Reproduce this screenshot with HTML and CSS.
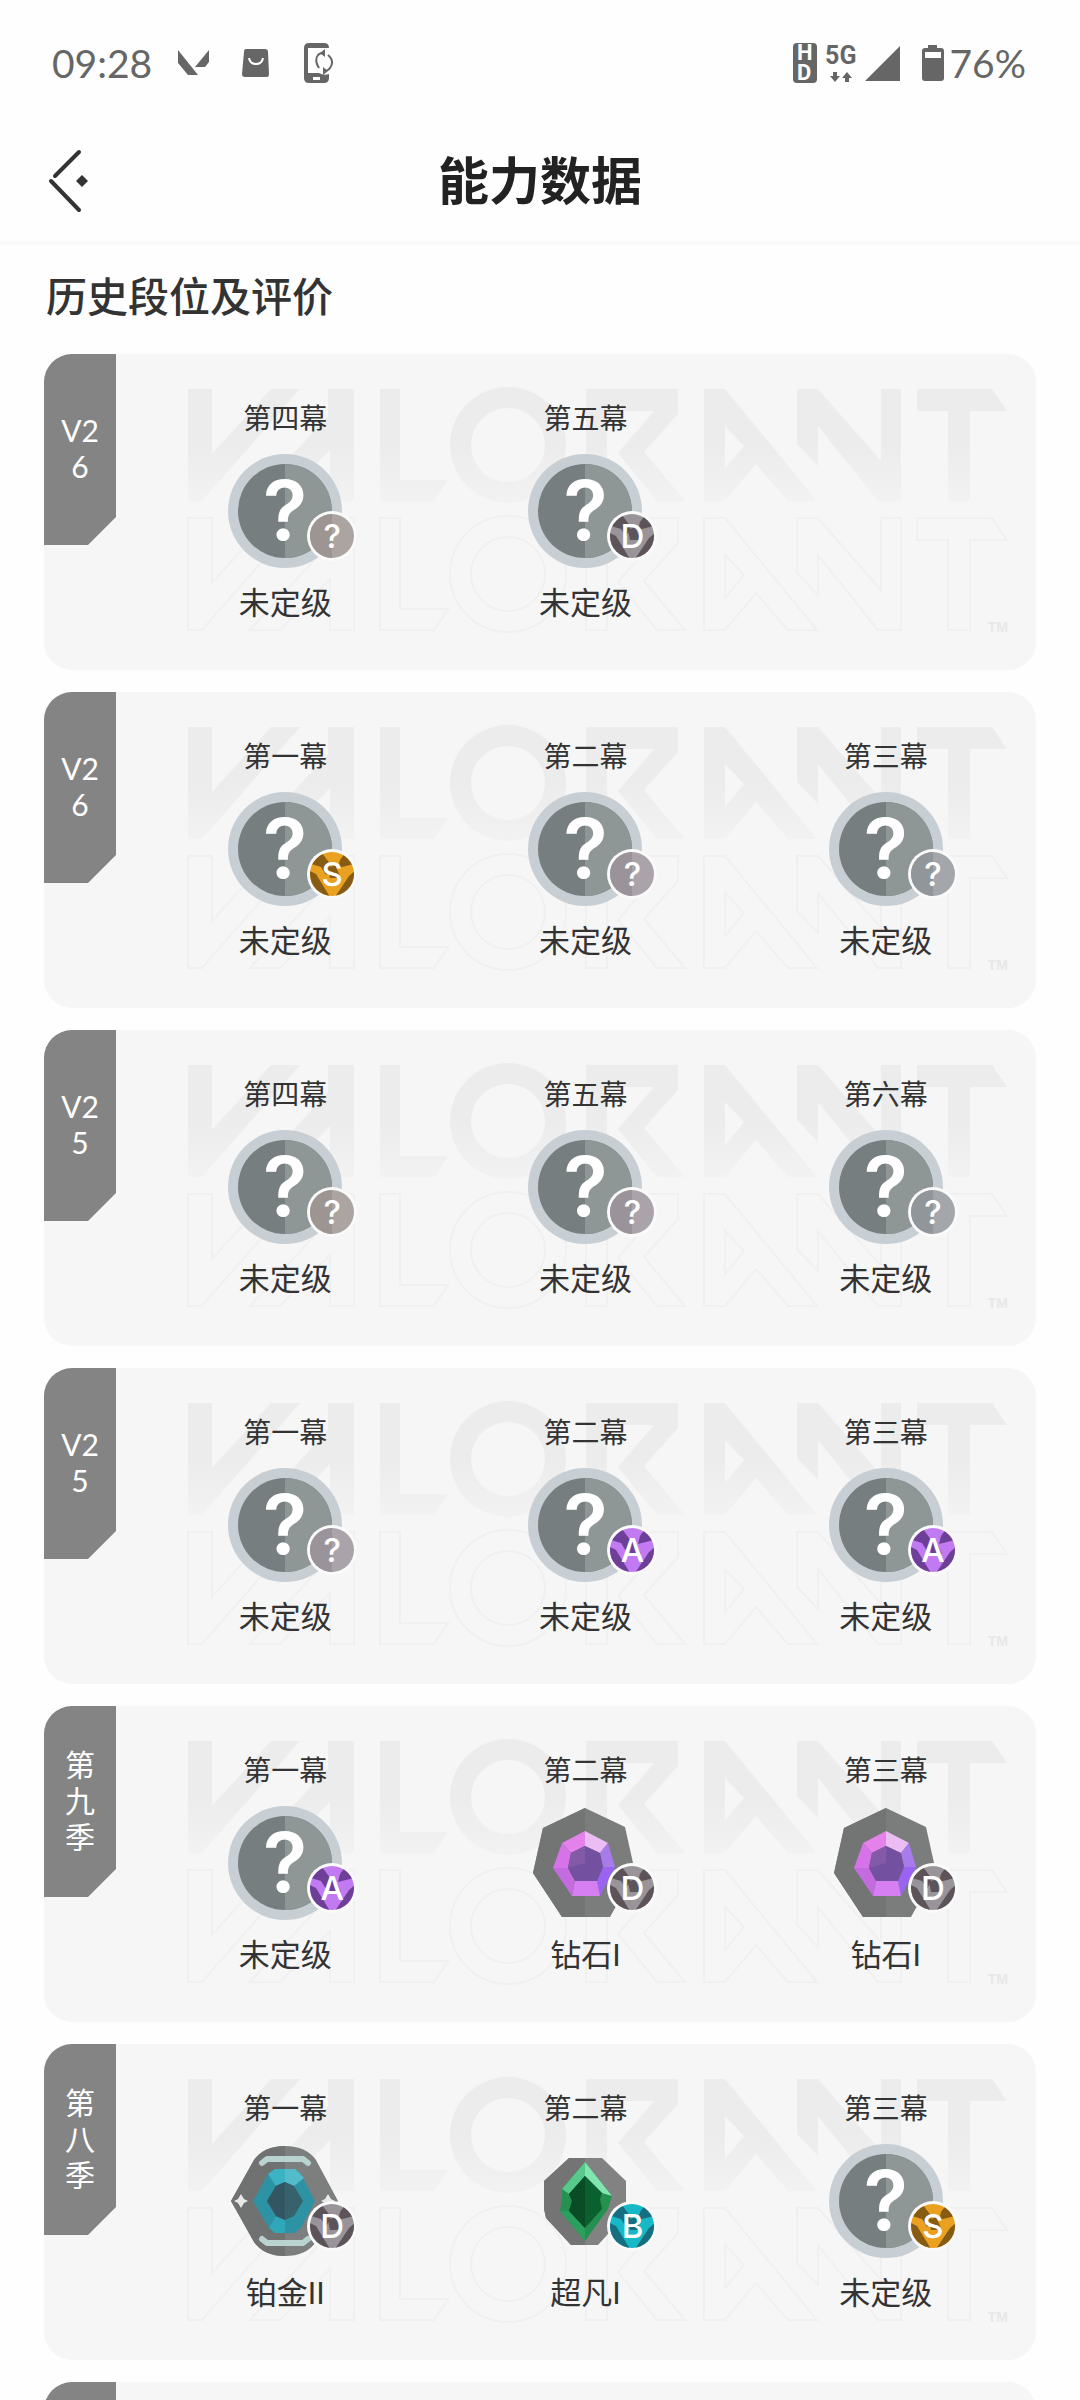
FILE: index.html
```html
<!DOCTYPE html>
<html lang="zh-CN">
<head>
<meta charset="utf-8">
<meta name="viewport" content="width=device-width, initial-scale=1">
<title>能力数据</title>
<link rel="stylesheet" href="styles.css">
</head>
<body>
<svg class="defs" aria-hidden="true">
  <defs>
    <linearGradient id="fade" x1="0" y1="0" x2="0" y2="1">
      <stop offset="0.5" stop-color="#ececec"/>
      <stop offset="1" stop-color="#f2f2f2"/>
    </linearGradient>
    <clipPath id="disc"><circle cx="24" cy="24" r="22"/></clipPath>
    <g id="wordmark">
      <path d="M144 35H168V100L227 35H256L158 147H144Z"/>
      <path d="M284 35H310V147H286V96L236 147H206L284 62Z"/>
      <path d="M336 35H356V126H404L390 147H336Z"/>
      <path fill-rule="evenodd" d="M464 33A58 58 0 1 1 464 149A58 58 0 1 1 464 33ZM464 54A37 37 0 1 0 464 128A37 37 0 1 0 464 54Z"/>
      <path d="M542 35H634V60L600 98L641 147H613L574 99L610 57H563V147H542Z"/>
      <path fill-rule="evenodd" d="M660 35H681L773 147H744L712 110L681 147H660ZM681 72V115L700 92Z"/>
      <path d="M753 35H774L837 107V35H857V147H834L774 72V112L753 90Z"/>
      <path d="M873 35H948L963 57H926V147H904V57H873Z"/>
    </g>
    <symbol id="backdrop" viewBox="0 0 992 316">
      <use href="#wordmark" fill="url(#fade)"/>
      <use href="#wordmark" y="129" fill="none" stroke="#f0f0f0" stroke-width="2"/>
    </symbol>
    <symbol id="unranked" viewBox="0 0 114 114">
      <circle cx="57" cy="57" r="57" fill="#c8cfd4"/>
      <circle cx="57" cy="57" r="47" fill="#767e80"/>
      <path d="M57 10A47 47 0 0 1 57 104Z" fill="#8f9696"/>
    </symbol>
    <symbol id="diamond" viewBox="0 0 114 114">
      <path d="M57 2L97 21L107 66L82 111H34L5 67L15 22Z" fill="#7a7d7c"/>
      <path d="M57 2L15 22L5 67L34 111H57Z" fill="#727574"/>
      <path d="M57 25L34 37L43 47L57 40Z" fill="#e481ea"/>
      <path d="M57 25L80 37L72 47L57 40Z" fill="#ecbcf5"/>
      <path d="M80 37L87 61H75L72 47Z" fill="#a77cea"/>
      <path d="M87 61L72 90L69 75L75 61Z" fill="#9a63f2"/>
      <path d="M72 90H44L47 75H69Z" fill="#d57ff2"/>
      <path d="M44 90L25 62H40L47 75Z" fill="#c56be0"/>
      <path d="M25 62L34 37L43 47L40 62Z" fill="#d673e8"/>
      <path d="M57 40L72 47L75 61L69 75H47L40 62L43 47Z" fill="#7350a0"/>
      <path d="M57 40L43 47L40 62L57 57Z" fill="#835aa6"/>
    </symbol>
    <symbol id="platinum" viewBox="0 0 114 114">
      <path d="M3 57L26 16Q36 2 57 2Q78 2 88 16L110 57L88 98Q78 112 57 112Q36 112 26 98Z" fill="#7d7f7e"/>
      <path d="M3 57L26 16Q36 2 57 2V112Q36 112 26 98Z" fill="#707272"/>
      <path d="M34 19L39 15H75L80 19" fill="none" stroke="#b9d3d1" stroke-width="6" stroke-linecap="round" stroke-linejoin="round"/>
      <path d="M34 95L39 99H75L80 95" fill="none" stroke="#b9d3d1" stroke-width="6" stroke-linecap="round" stroke-linejoin="round"/>
      <path d="M25 57L40 30L47 25H67L73 30L87 57L73 84L67 89H47L41 84Z" fill="#2d92a3"/>
      <path d="M47 25H67L73 30L66 42L57 38L48 42L40 30Z" fill="#3bb3c4"/>
      <path d="M57 25V38L66 42L76 34L67 25Z" fill="#52bccb"/>
      <path d="M57 89V76L48 72L41 84L47 89Z" fill="#30a7b8"/>
      <path d="M57 38L66 42L75 57L66 72L57 76L48 72L39 57L48 42Z" fill="#37616b"/>
      <path d="M57 38L48 42L39 57L48 72L57 76Z" fill="#335663"/>
      <path d="M13 50L16 55L20 57L16 59L13 64L10 59L6 57L10 55Z" fill="#e8e8e8"/>
      <path d="M100 50L103 55L107 57L103 59L100 64L97 59L93 57L97 55Z" fill="#e8e8e8"/>
    </symbol>
    <symbol id="ascendant" viewBox="0 0 114 114">
      <path d="M41 14H74L98 37V70L70 101H43L18 74L16 65V37Z" fill="#828282"/>
      <path d="M41 14H57V101H43L18 74L16 65V37Z" fill="#747474"/>
      <path d="M57 18L84 52L80 65L57 97L32 67L34 54V45Z" fill="#249150"/>
      <path d="M57 18L34 45L41 50L57 32Z" fill="#57c98b"/>
      <path d="M57 18L84 52L74 49L57 32Z" fill="#82e5af"/>
      <path d="M32 67L42 67L57 84V97Z" fill="#2b9f5d"/>
      <path d="M57 32L74 49L72 55L74 65L57 84L41 67L44 57L41 50Z" fill="#0b602f"/>
      <path d="M57 32L41 50L44 57L41 67L57 84Z" fill="#0a4c26"/>
    </symbol>
    <symbol id="facets" viewBox="0 0 48 48">
      <g clip-path="url(#disc)">
        <rect class="facet-light" width="48" height="48"/>
        <g class="facet-dark">
          <path d="M3 14L14 3L23 15L18 25L13 17Z"/>
          <path d="M32 10L37 3L46 14L30 18Z"/>
          <path d="M0 20L8 24L22 47H4Z"/>
          <path d="M48 20L41 26L27 47H44Z"/>
          <path d="M20 18L27 15L33 28H22Z"/>
        </g>
      </g>
    </symbol>
    <symbol id="plain" viewBox="0 0 48 48">
      <circle class="facet-light" cx="24" cy="24" r="22"/>
      <path class="facet-dark" d="M24 2A22 22 0 0 0 24 46Z"/>
    </symbol>
  </defs>
</svg>

<div class="app">
  <div class="status">
    <div class="status-group">
      <span class="clock">09:28</span>
      <svg class="ico-app" viewBox="0 0 32 26"><path d="M0 0L20 25H10L0 13Z"/><path d="M31 0V12L27 17H17Z"/></svg>
      <svg class="ico-bag" viewBox="0 0 28 28"><path d="M4 0H23Q26 0 26 3L27 25Q27 28 25 28H3Q0 28 0 25L2 3Q2 0 4 0Z"/><path d="M7 9Q8 15 14 15Q20 15 21 9" fill="none" stroke="#fff" stroke-width="2"/></svg>
      <svg class="ico-phone" viewBox="0 0 30 40"><path d="M5 0H20Q25 0 25 5H4V30H15Q20 33 25 31V35Q25 40 20 40H5Q0 40 0 35V5Q0 0 5 0ZM9 34V37H16V34Z" fill-rule="evenodd"/><g fill="none" stroke="#666" stroke-width="2"><path d="M15 25Q10 17 14 12Q16 10 19 10"/><path d="M24 12Q31 18 26 25Q24 28 20 28"/></g><path d="M16 10L21 6V14ZM24 28L19 24V32Z"/></svg>
    </div>
    <div class="status-group">
      <b class="hd">HD</b>
      <span class="net"><b>5G</b><svg class="ico-arrows" viewBox="0 0 22 10"><path d="M3 0H7V4H10L5 10L0 4H3ZM15 10H19V6H22L17 0L12 6H15Z"/></svg></span>
      <svg class="ico-signal" viewBox="0 0 35 35"><path d="M35 0V35H0Z"/></svg>
      <svg class="ico-battery" viewBox="0 0 22 36"><path d="M6 0H15V3H19Q22 3 22 6V33Q22 36 19 36H3Q0 36 0 33V6Q0 3 3 3H6ZM3 7V13H19V7Z" fill-rule="evenodd"/></svg>
      <span class="clock">76%</span>
    </div>
  </div>

  <header class="nav">
    <button class="back" type="button" aria-label="返回">
      <svg viewBox="0 0 40 64"><path d="M31 3L7 27M3 32L31 61" fill="none" stroke="#333" stroke-width="4" stroke-linecap="round"/><path d="M34 26L40 32L34 38L28 32Z" fill="#333"/></svg>
    </button>
    <h1>能力数据</h1>
  </header>

  <main class="content">
    <h2>历史段位及评价</h2>

    <section class="card">
      <svg class="backdrop" viewBox="0 0 992 316" aria-hidden="true"><use href="#backdrop"/></svg><small class="tm">TM</small>
      <h3 class="season"><span>V26</span></h3>
      <div class="acts">
        <div class="act"><p class="name">第四幕</p><div class="rank"><svg><use href="#unranked"/></svg><span class="mark">?</span><span class="badge warm"><svg><use href="#plain"/></svg><i>?</i></span></div><p class="tier">未定级</p></div>
        <div class="act"><p class="name">第五幕</p><div class="rank"><svg><use href="#unranked"/></svg><span class="mark">?</span><span class="badge d"><svg><use href="#facets"/></svg><i>D</i></span></div><p class="tier">未定级</p></div>
      </div>
    </section>

    <section class="card">
      <svg class="backdrop" viewBox="0 0 992 316" aria-hidden="true"><use href="#backdrop"/></svg><small class="tm">TM</small>
      <h3 class="season"><span>V26</span></h3>
      <div class="acts">
        <div class="act"><p class="name">第一幕</p><div class="rank"><svg><use href="#unranked"/></svg><span class="mark">?</span><span class="badge s"><svg><use href="#facets"/></svg><i>S</i></span></div><p class="tier">未定级</p></div>
        <div class="act"><p class="name">第二幕</p><div class="rank"><svg><use href="#unranked"/></svg><span class="mark">?</span><span class="badge mauve"><svg><use href="#plain"/></svg><i>?</i></span></div><p class="tier">未定级</p></div>
        <div class="act"><p class="name">第三幕</p><div class="rank"><svg><use href="#unranked"/></svg><span class="mark">?</span><span class="badge cool"><svg><use href="#plain"/></svg><i>?</i></span></div><p class="tier">未定级</p></div>
      </div>
    </section>

    <section class="card">
      <svg class="backdrop" viewBox="0 0 992 316" aria-hidden="true"><use href="#backdrop"/></svg><small class="tm">TM</small>
      <h3 class="season"><span>V25</span></h3>
      <div class="acts">
        <div class="act"><p class="name">第四幕</p><div class="rank"><svg><use href="#unranked"/></svg><span class="mark">?</span><span class="badge warm"><svg><use href="#plain"/></svg><i>?</i></span></div><p class="tier">未定级</p></div>
        <div class="act"><p class="name">第五幕</p><div class="rank"><svg><use href="#unranked"/></svg><span class="mark">?</span><span class="badge mauve"><svg><use href="#plain"/></svg><i>?</i></span></div><p class="tier">未定级</p></div>
        <div class="act"><p class="name">第六幕</p><div class="rank"><svg><use href="#unranked"/></svg><span class="mark">?</span><span class="badge cool"><svg><use href="#plain"/></svg><i>?</i></span></div><p class="tier">未定级</p></div>
      </div>
    </section>

    <section class="card">
      <svg class="backdrop" viewBox="0 0 992 316" aria-hidden="true"><use href="#backdrop"/></svg><small class="tm">TM</small>
      <h3 class="season"><span>V25</span></h3>
      <div class="acts">
        <div class="act"><p class="name">第一幕</p><div class="rank"><svg><use href="#unranked"/></svg><span class="mark">?</span><span class="badge mauve"><svg><use href="#plain"/></svg><i>?</i></span></div><p class="tier">未定级</p></div>
        <div class="act"><p class="name">第二幕</p><div class="rank"><svg><use href="#unranked"/></svg><span class="mark">?</span><span class="badge a"><svg><use href="#facets"/></svg><i>A</i></span></div><p class="tier">未定级</p></div>
        <div class="act"><p class="name">第三幕</p><div class="rank"><svg><use href="#unranked"/></svg><span class="mark">?</span><span class="badge a"><svg><use href="#facets"/></svg><i>A</i></span></div><p class="tier">未定级</p></div>
      </div>
    </section>

    <section class="card">
      <svg class="backdrop" viewBox="0 0 992 316" aria-hidden="true"><use href="#backdrop"/></svg><small class="tm">TM</small>
      <h3 class="season"><span>第九季</span></h3>
      <div class="acts">
        <div class="act"><p class="name">第一幕</p><div class="rank"><svg><use href="#unranked"/></svg><span class="mark">?</span><span class="badge a"><svg><use href="#facets"/></svg><i>A</i></span></div><p class="tier">未定级</p></div>
        <div class="act"><p class="name">第二幕</p><div class="rank"><svg><use href="#diamond"/></svg><span class="badge d"><svg><use href="#facets"/></svg><i>D</i></span></div><p class="tier">钻石I</p></div>
        <div class="act"><p class="name">第三幕</p><div class="rank"><svg><use href="#diamond"/></svg><span class="badge d"><svg><use href="#facets"/></svg><i>D</i></span></div><p class="tier">钻石I</p></div>
      </div>
    </section>

    <section class="card">
      <svg class="backdrop" viewBox="0 0 992 316" aria-hidden="true"><use href="#backdrop"/></svg><small class="tm">TM</small>
      <h3 class="season"><span>第八季</span></h3>
      <div class="acts">
        <div class="act"><p class="name">第一幕</p><div class="rank"><svg><use href="#platinum"/></svg><span class="badge d"><svg><use href="#facets"/></svg><i>D</i></span></div><p class="tier">铂金II</p></div>
        <div class="act"><p class="name">第二幕</p><div class="rank"><svg><use href="#ascendant"/></svg><span class="badge b"><svg><use href="#facets"/></svg><i>B</i></span></div><p class="tier">超凡I</p></div>
        <div class="act"><p class="name">第三幕</p><div class="rank"><svg><use href="#unranked"/></svg><span class="mark">?</span><span class="badge s"><svg><use href="#facets"/></svg><i>S</i></span></div><p class="tier">未定级</p></div>
      </div>
    </section>

    <section class="card card-empty">
      <h3 class="season"></h3>
    </section>
  </main>
</div>
</body>
</html>
```
FILE: styles.css
```css
* {
  box-sizing: border-box;
  margin: 0;
  padding: 0;
}

body {
  background: #fefefe;
  color: #333;
  font-family: "Lato", "Noto Sans CJK SC", sans-serif;
}

svg {
  display: block;
}

.defs {
  position: absolute;
  width: 0;
  height: 0;
}

.app {
  display: flex;
  flex-direction: column;
  height: 100vh;
}

/* status bar */
.status {
  display: flex;
  flex: none;
  justify-content: space-between;
  align-items: center;
  height: 126px;
  padding: 0 54px 0 52px;
  color: #666;
  fill: #666;
}

.status-group {
  display: flex;
  align-items: center;
}

.clock {
  font-size: 39px;
  line-height: 48px;
}

.ico-app {
  width: 32px;
  height: 26px;
  margin-left: 26px;
}

.ico-bag {
  width: 28px;
  height: 28px;
  margin-left: 32px;
}

.ico-phone {
  width: 30px;
  height: 40px;
  margin-left: 34px;
}

.hd {
  width: 24px;
  height: 40px;
  padding: 0 4px;
  border-radius: 4px;
  background: #666;
  color: #fff;
  font: 700 22px/20px Roboto, sans-serif;
  word-break: break-all;
}

.net {
  display: flex;
  flex-direction: column;
  align-items: center;
  gap: 4px;
  margin: 0 8px;
  font: 25px/24px Roboto, sans-serif;
}

.ico-arrows {
  width: 22px;
  height: 10px;
}

.ico-signal {
  width: 35px;
  height: 35px;
}

.ico-battery {
  width: 22px;
  height: 36px;
  margin: 0 6px 0 22px;
}

/* title bar */
.nav {
  display: grid;
  flex: none;
  grid-template-columns: 120px 1fr 120px;
  align-items: center;
  height: 119px;
  padding-bottom: 5px;
  border-bottom: 4px solid #f9f9f9;
}

.back {
  width: 88px;
  padding-left: 48px;
  border: 0;
  background: none;
}

.back svg {
  width: 40px;
  height: 64px;
}

h1 {
  color: #222;
  font-size: 51px;
  font-weight: 700;
  line-height: 64px;
  text-align: center;
}

/* season list */
.content {
  display: flex;
  flex: 1;
  flex-direction: column;
  gap: 22px;
  min-height: 0;
  padding: 22px 44px;
  overflow-y: auto;
  scrollbar-width: none;
}

h2 {
  font-size: 41px;
  font-weight: 500;
  line-height: 60px;
  margin-bottom: 5px;
  padding-left: 2px;
}

.card {
  position: relative;
  display: flex;
  flex: none;
  gap: 19px;
  align-items: flex-start;
  overflow: hidden;
  border-radius: 28px;
  background: #f6f6f6;
}

.card-empty {
  height: 316px;
}

.backdrop {
  position: absolute;
  inset: 0;
  width: 100%;
  height: 100%;
}

.tm {
  position: absolute;
  right: 28px;
  bottom: 36px;
  color: #e8e8e8;
  font: 700 14px/14px "Liberation Sans", sans-serif;
}

.season {
  position: relative;
  display: flex;
  justify-content: center;
  align-items: center;
  width: 72px;
  height: 191px;
  padding-bottom: 4px;
  background: #848484;
  clip-path: polygon(0 0, 100% 0, 100% 163px, 44px 100%, 0 100%);
  color: #fff;
  font-size: 30px;
  font-weight: 400;
  line-height: 36px;
}

.season span {
  width: 40px;
  text-align: center;
  word-break: break-all;
}

.acts {
  position: relative;
  display: grid;
  flex: 1;
  grid-template-columns: repeat(3, 1fr);
  padding: 43px 0 45px;
}

.act {
  display: flex;
  flex-direction: column;
  align-items: center;
  gap: 15px;
}

.name {
  font-size: 28px;
  line-height: 42px;
}

.tier {
  font-family: Roboto, "Noto Sans CJK SC", sans-serif;
  font-size: 31px;
  line-height: 42px;
}

.rank {
  position: relative;
  width: 114px;
  height: 114px;
}

.rank svg {
  width: 100%;
  height: 100%;
}

.mark {
  position: absolute;
  inset: 0;
  color: #fff;
  font: 600 82px/114px Inter, sans-serif;
  text-align: center;
}

.badge {
  position: absolute;
  top: 57px;
  left: 79px;
  width: 50px;
  height: 50px;
  padding: 1px;
  border-radius: 50%;
  background: #fbfafa;
}

.badge i {
  position: absolute;
  inset: 0;
  color: #fff;
  font: 500 33px/50px Inter, sans-serif;
  text-align: center;
}

.facet-light {
  fill: var(--light);
}

.facet-dark {
  fill: var(--dark);
}

.warm {
  --light: #aca4a0;
  --dark: #9d9591;
}

.mauve {
  --light: #aaa4aa;
  --dark: #9a949a;
}

.cool {
  --light: #a3a7ab;
  --dark: #91969a;
}

.d {
  --light: #99949a;
  --dark: #5c5458;
}

.s {
  --light: #eaa11f;
  --dark: #865c14;
}

.a {
  --light: #c27af3;
  --dark: #6d3f97;
}

.b {
  --light: #17b9c6;
  --dark: #166e80;
}
```
